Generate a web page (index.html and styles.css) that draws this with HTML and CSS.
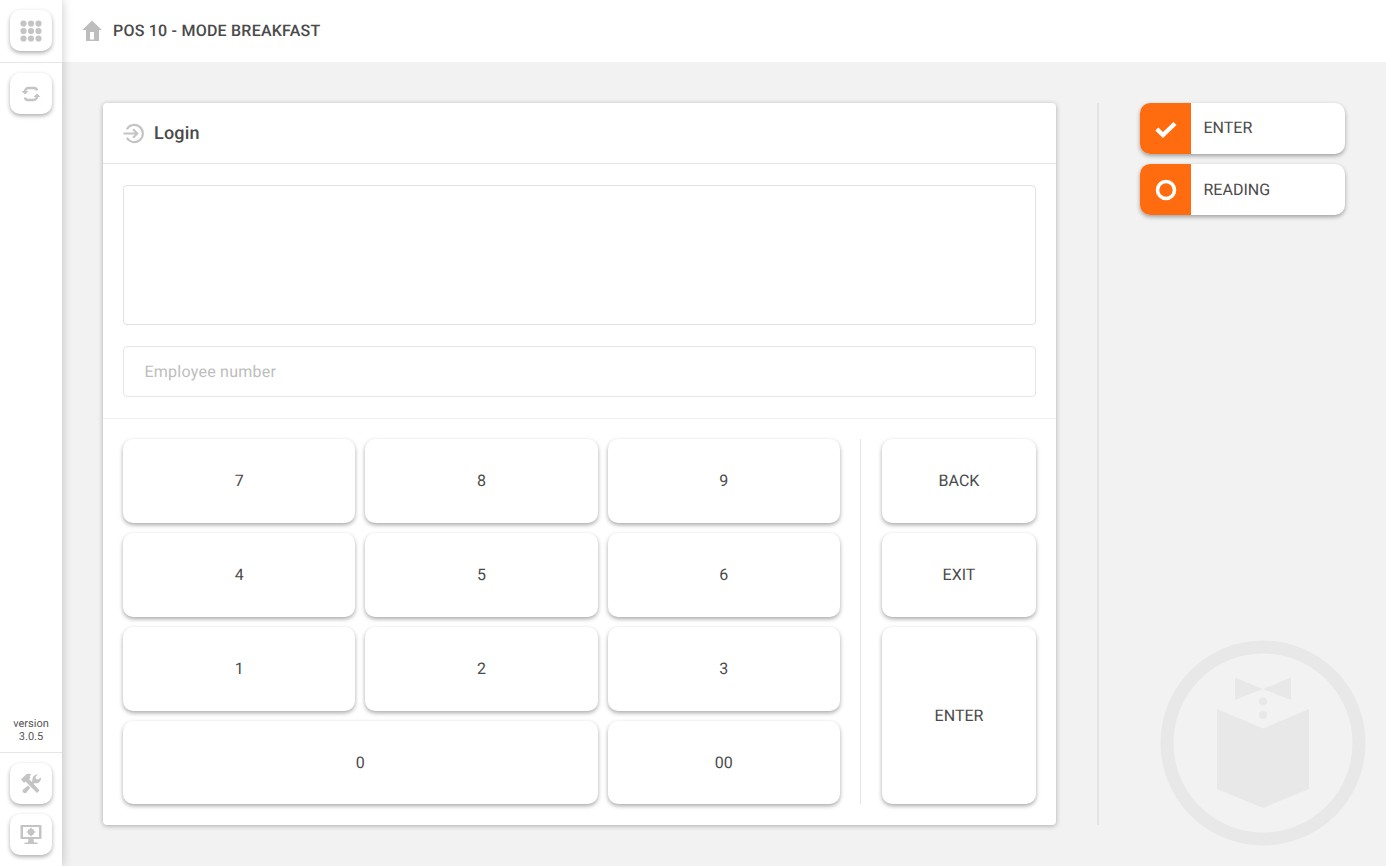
FILE: index.html
```html
<!DOCTYPE html>
<html lang="en">
<head>
<meta charset="utf-8">
<title>POS 10</title>
<link rel="stylesheet" href="styles.css">
</head>
<body>
<div class="app">
  <aside class="sidebar">
    <div class="side-top">
      <button class="icon-btn"><svg class="ico" viewBox="0 0 22 22"><g fill="#c4c4c4"><circle cx="3.500" cy="3.500" r="3.100"/><circle cx="11" cy="3.500" r="3.100"/><circle cx="18.500" cy="3.500" r="3.100"/><circle cx="3.500" cy="11" r="3.100"/><circle cx="11" cy="11" r="3.100"/><circle cx="18.500" cy="11" r="3.100"/><circle cx="3.500" cy="18.500" r="3.100"/><circle cx="11" cy="18.500" r="3.100"/><circle cx="18.500" cy="18.500" r="3.100"/></g></svg></button>
    </div>
    <div class="side-mid">
      <button class="icon-btn"><svg class="ico" viewBox="0 0 22 22"><g fill="none" stroke="#c4c4c4" stroke-width="2.400"><path d="M5 8.500a3.500 3.500 0 0 1 3.500-3.500h5.500a3 3 0 0 1 3 2.500"/><path d="M17 13.500a3.500 3.500 0 0 1-3.500 3.500H8a3 3 0 0 1-3-2.500"/></g><path d="M1.500 8h7L5 11.500zM13.500 14h7L17 10.500z" fill="#c4c4c4"/></svg></button>
      <div class="version">version<br>3.0.5</div>
    </div>
    <div class="side-bottom">
      <button class="icon-btn"><svg class="ico" viewBox="0 0 22 22"><g fill="#c4c4c4"><path d="M1 6.500 6 1.500c2-1.200 4-1 5.500 0L9.500 3l1 1.500L9 6l10.500 11.500-2.500 2.500L5.500 8.500 4 10z"/><path d="M21 4.500a5 5 0 0 1-6.500 5.500L13 11.500 10.800 9.200 12.500 7.500A5 5 0 0 1 18 1.500L15.500 4l.5 2 2 .5zM8 12.500l2.200 2.300-3.700 4.700a2.200 2.200 0 0 1-3.300-3.100z"/></g></svg></button>
      <button class="icon-btn"><svg class="ico" viewBox="0 0 22 22"><path fill-rule="evenodd" fill="#c4c4c4" d="M1.500 1h19a1 1 0 0 1 1 1v12a1 1 0 0 1-1 1h-7l.5 3.500h3.500V20h-13v-1.500H8l.5-3.500h-7a1 1 0 0 1-1-1V2a1 1 0 0 1 1-1zM3 3v10h16V3z"/><g fill="#c4c4c4"><circle cx="11" cy="8" r="3.100"/><path d="M10.200 3.800h1.600v8.400h-1.600zM6.800 7.200h8.400v1.600H6.800zM7.900 6 9 4.900l5.100 5.100L13 11.100zM13 4.900 14.100 6 9 11.100 7.900 10z"/></g></svg></button>
    </div>
  </aside>
  <div class="main">
    <header class="topbar">
      <svg class="home" viewBox="0 0 22 22"><path fill-rule="evenodd" fill="#bdbdbd" d="M11 .5 20.800 10H18v11H5V10H1.200zM9 12v7.500h4V12z"/></svg>
      <span class="top-title">POS 10 - MODE BREAKFAST</span>
    </header>
    <div class="content">
      <section class="card">
        <div class="card-head">
          <svg class="login-ico" viewBox="0 0 22 22"><g fill="none" stroke="#c4c4c4" stroke-width="2.200"><path d="M4 6.500A9 9 0 1 1 4 15.500"/><path d="M.5 11H15M10.500 6.500 15 11l-4.500 4.500"/></g></svg>
          <h1 class="card-title">Login</h1>
        </div>
        <div class="form">
          <div class="display"></div>
          <input class="emp" type="text" placeholder="Employee number">
        </div>
        <div class="pad">
          <div class="digits">
            <button class="key lift">7</button>
            <button class="key lift">8</button>
            <button class="key lift">9</button>
            <button class="key lift">4</button>
            <button class="key lift">5</button>
            <button class="key lift">6</button>
            <button class="key lift">1</button>
            <button class="key lift">2</button>
            <button class="key lift">3</button>
            <button class="key wide">0</button>
            <button class="key">00</button>
          </div>
          <div class="pad-sep"></div>
          <div class="actions">
            <button class="key lift">BACK</button>
            <button class="key lift">EXIT</button>
            <button class="key">ENTER</button>
          </div>
        </div>
      </section>
      <div class="vsep"></div>
      <div class="side-actions">
        <button class="status"><span class="status-ico"><svg class="st-svg" viewBox="0 0 22 22"><path d="M1.800 11 8 17 20 5.500" fill="none" stroke="#fff" stroke-width="4.400"/></svg></span><span class="status-label">ENTER</span></button>
        <button class="status"><span class="status-ico"><svg class="st-svg" viewBox="0 0 22 22"><circle cx="11" cy="11" r="8.500" fill="none" stroke="#fff" stroke-width="3.600"/></svg></span><span class="status-label">READING</span></button>
      </div>
    </div>
  </div>
</div>
<svg class="watermark" viewBox="0 0 206 206">
  <circle cx="103" cy="103" r="96" fill="none" stroke="#e8e8e8" stroke-width="13"/>
  <path fill="#e8e8e8" d="M75 37.500 103 49 131 37.500V60L103 49 75 60zM57 69 103 88.500 149 69V149L103 168 57 149z"/>
  <circle cx="103" cy="61.500" r="4" fill="#e8e8e8"/>
  <circle cx="103" cy="75" r="4" fill="#e8e8e8"/>
</svg>
</body>
</html>
```
FILE: styles.css
```css
* { box-sizing: border-box; }
html, body { margin: 0; height: 100%; }
body { font-family: Roboto, "Liberation Sans", sans-serif; color: #4a4a4a; background: #f2f2f2; overflow: hidden; text-rendering: geometricPrecision; }
button { font: inherit; color: inherit; border: 0; background: #fff; padding: 0; text-rendering: geometricPrecision; }
.app { display: flex; height: 866px; }
.sidebar { width: 62px; flex: none; background: #fff; display: flex; flex-direction: column; box-shadow: 0 0 10px rgba(0,0,0,.22); position: relative; z-index: 2; }
.side-top { height: 63px; padding: 10px; border-bottom: 1px solid #e6e6e6; }
.side-mid { flex: 1; padding: 10px; display: flex; flex-direction: column; justify-content: space-between; }
.side-bottom { padding: 10px 10px 11px; border-top: 1px solid #e6e6e6; display: flex; flex-direction: column; gap: 10px; }
.icon-btn { width: 42px; height: 41px; border-radius: 10px; box-shadow: 0 2px 4px rgba(0,0,0,.32); display: flex; align-items: center; justify-content: center; }
.ico { width: 22px; height: 22px; }
.version { font-size: 11px; line-height: 13px; text-align: center; color: #555; margin: 0 -8px -1px; }
.main { flex: 1; display: flex; flex-direction: column; min-width: 0; }
.topbar { height: 62px; background: #fff; display: flex; align-items: center; padding: 0 0 2px 19px; flex: none; }
.home { width: 22px; height: 22px; margin: 2px 10px 0 0; }
.top-title { font-size: 16px; font-weight: 500; letter-spacing: .22px; }
.content { flex: 1; display: flex; padding: 41px; min-height: 0; }
.card { flex: 1; background: #fff; border-radius: 4px; box-shadow: 0 1px 5px rgba(0,0,0,.3); display: flex; flex-direction: column; }
.card-head { height: 61px; flex: none; display: flex; align-items: center; padding-left: 20px; border-bottom: 1px solid #e4e4e4; }
.login-ico { width: 21px; height: 21px; margin-right: 10px; }
.card-title { font-size: 18px; font-weight: 500; letter-spacing: .2px; margin: 0; }
.form { padding: 21px 20px; border-bottom: 1px solid #f0f0f0; display: flex; flex-direction: column; gap: 21px; flex: none; }
.display { height: 140px; border: 1px solid #e2e2e2; border-radius: 4px; }
.emp { height: 51px; border: 1px solid #e6e6e6; border-radius: 4px; padding: 0 20.500px; font: 16px Roboto, sans-serif; letter-spacing: .24px; color: #444; outline: 0; text-rendering: geometricPrecision; }
.emp::placeholder { color: #bdbdbd; opacity: 1; }
.pad { flex: 1; display: flex; padding: 20px 20px 21px; min-height: 0; }
.digits { flex: none; width: 717px; display: grid; grid-template-columns: repeat(3, 1fr); grid-template-rows: 84px 84px 84px 1fr; gap: 10px; }
.pad-sep { width: 1px; background: #e4e4e4; margin: 0 21px 0 20px; flex: none; }
.actions { flex: 1; display: grid; grid-template-rows: 84px 84px 1fr; gap: 10px; }
.key { border-radius: 10px; font-size: 16px; box-shadow: 0 2px 4px rgba(0,0,0,.34); }
.lift { padding-bottom: 1px; }
.wide { grid-column: span 2; }
.vsep { width: 2px; background: #e4e4e4; margin: 0 41px; flex: none; }
.side-actions { width: 205px; flex: none; display: flex; flex-direction: column; gap: 10px; }
.status { height: 51px; display: flex; align-items: stretch; border-radius: 10px; box-shadow: 0 2px 4px rgba(0,0,0,.34); overflow: hidden; text-align: left; }
.status-ico { width: 51px; background: #ff6b0f; display: flex; align-items: center; justify-content: center; }
.st-svg { width: 22px; height: 22px; }
.status-label { font-size: 16px; padding-left: 12.500px; align-self: center; }
.status:first-child .status-label { padding-bottom: 2px; }
.watermark { position: absolute; left: 1160px; top: 640px; width: 206px; height: 206px; }
```
